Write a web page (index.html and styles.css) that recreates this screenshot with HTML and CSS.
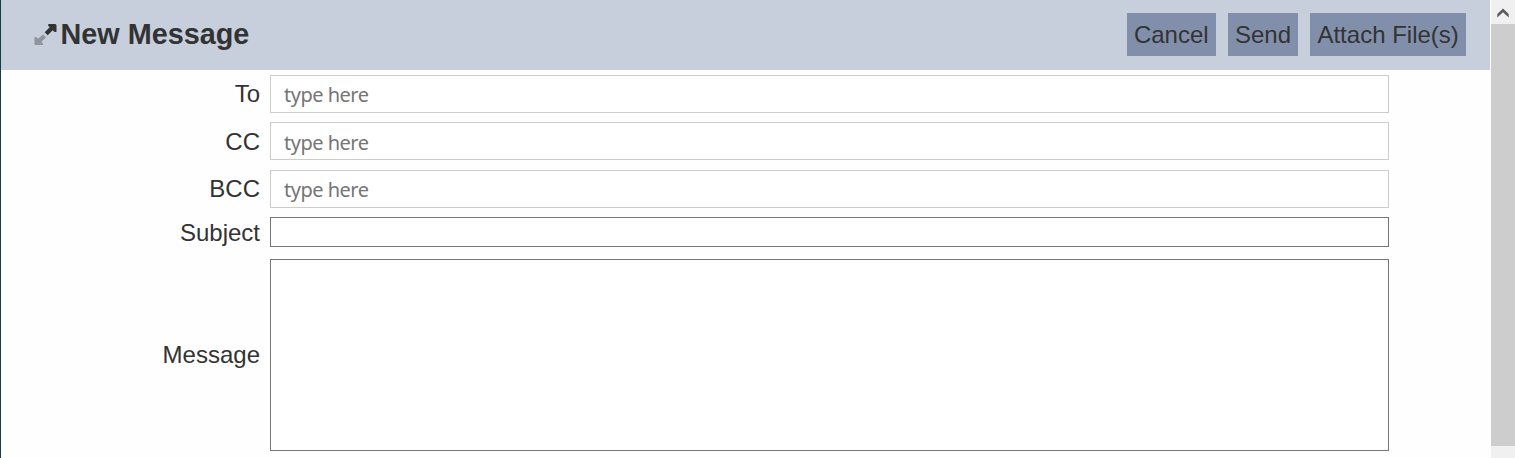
FILE: index.html
```html
<!DOCTYPE html>
<html lang="en">
<head>
  <meta charset="UTF-8">
  <title>New Message</title>
  <link rel="stylesheet" href="styles.css">
</head>
<body>
  <main class="compose">
    <header class="header">
      <svg class="expand" width="24" height="24" viewBox="0 0 24 24">
        <path fill="#333" d="M14.500 1H21q1.500 0 1.500 1.500V9h-2l-1.800-1.800-5 5-3-3 5-5-1.700-1.700z"/>
        <path fill="#8f959d" d="M9 11.500l3 2.700-4.700 4.700 1.700 1.600V22H1.500Q.5 22 .5 21v-7H2l2 1.800z"/>
      </svg>
      <h1>New Message</h1>
      <div class="actions">
        <button type="button">Cancel</button>
        <button type="button">Send</button>
        <button type="button">Attach File(s)</button>
      </div>
    </header>
    <form class="fields">
      <label for="to">To</label>
      <input type="text" id="to" class="address" placeholder="type here" autocomplete="off">
      <label for="cc">CC</label>
      <input type="text" id="cc" class="address" placeholder="type here" autocomplete="off">
      <label for="bcc">BCC</label>
      <input type="text" id="bcc" class="address" placeholder="type here" autocomplete="off">
      <label for="subject">Subject</label>
      <input type="text" id="subject" class="subject" autocomplete="off">
      <label for="message">Message</label>
      <textarea id="message" class="message"></textarea>
    </form>
  </main>
  <div class="scrollbar">
    <div class="scroll-up">
      <svg width="12" height="10" viewBox="0 0 12 10">
        <path fill="#5c5c5c" d="M6 0.500L11.700 6v3.600L6 4.300 0.300 9.600V6z"/>
      </svg>
    </div>
    <div class="thumb"></div>
  </div>
</body>
</html>
```

FILE: styles.css
```css
* { box-sizing: border-box; }
body { margin: 0; height: 458px; display: flex; overflow: hidden; background: #fefefe; color: #333; font-family: "Liberation Sans", Arial, sans-serif; font-size: 24px; }
.compose { flex: 1; border-left: 1px solid #173c43; }
.header { display: flex; align-items: center; height: 70px; padding: 0 24px 1px 33px; background: #c7cedc; }
.expand { margin-right: 2.500px; }
h1 { margin: 0; font-size: 28.8px; line-height: 33px; }
.actions { display: flex; gap: 12px; margin-left: auto; }
button { height: 43px; padding: 0 7.200px; border: none; background: #828fab; color: #333; font: inherit; white-space: nowrap; }
.fields { display: grid; grid-template-columns: 259px 1119px; column-gap: 10px; grid-template-rows: 38px 38px 38px 30px 190px; row-gap: 9.400px; align-items: center; padding-top: 5px; }
label { padding-top: 0.600px; text-align: right; line-height: 28px; }
input, textarea { display: block; width: 100%; height: 100%; margin: 0; border: 1px solid #767676; border-radius: 0; background: #fff; color: #333; font: inherit; outline: none; resize: none; }
.address { padding: 1px 13px 0; border-color: #ccc; font-family: "Noto Sans", sans-serif; font-size: 20px; letter-spacing: -0.500px; }
#cc { padding-top: 2px; }
.address::placeholder { color: #757575; }
.message { align-self: start; height: 192px; margin-top: 2px; }
label[for="subject"] { padding-top: 1.200px; }
label[for="message"] { padding-top: 6px; }
.scrollbar { width: 24px; margin-left: 1px; background: #f0f0f0; }
.scroll-up { display: flex; align-items: center; justify-content: center; height: 24px; padding-top: 1px; }
.thumb { height: 422px; background: #cdcdcd; }
```
